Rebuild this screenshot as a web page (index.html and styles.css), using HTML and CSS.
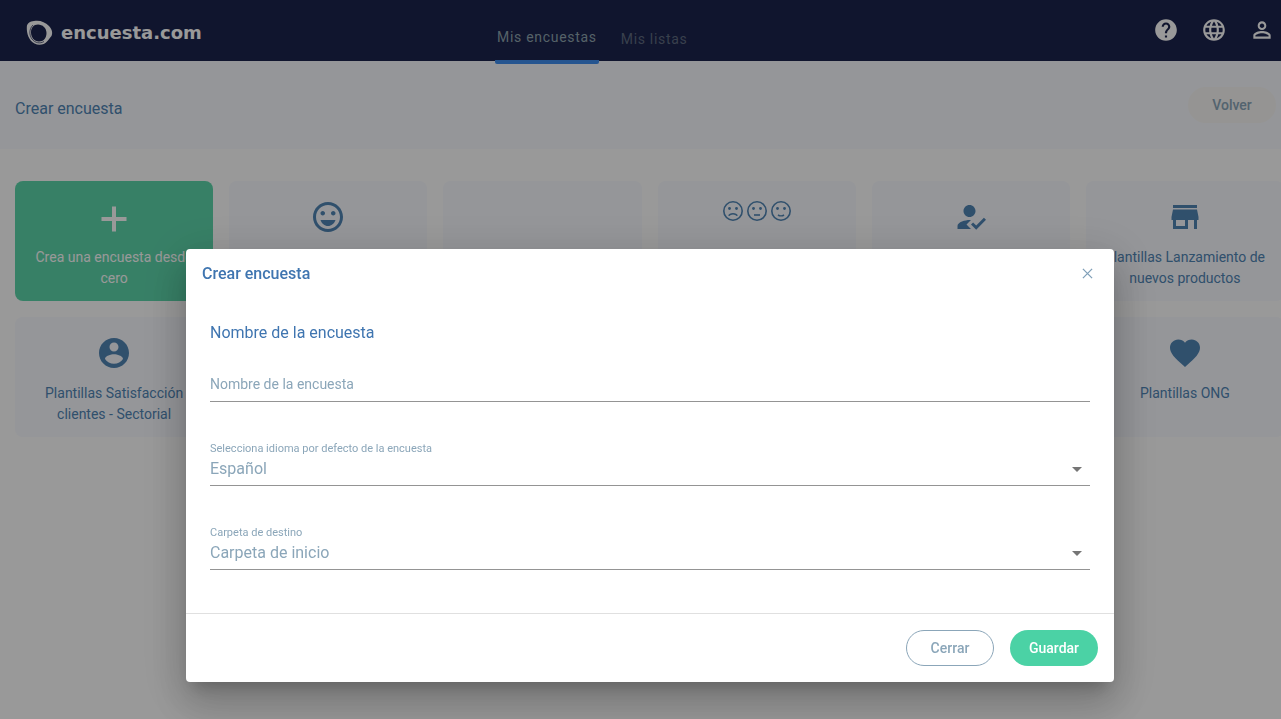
FILE: index.html
```html
<!DOCTYPE html>
<html lang="es">
<head>
<meta charset="utf-8">
<title>encuesta.com</title>
<link rel="stylesheet" href="styles.css">
</head>
<body>
<header class="topbar">
  <div class="brand">
    <svg class="brand-mark" viewBox="0 0 27 26" aria-hidden="true">
      <path fill="#fff" fill-rule="evenodd" d="M8 1C14 0 19 2 23 6C26 9 27 13 25.500 16C24 18 23 19 21.500 21C18 25 13 26 8.500 23.500C3 20.500 .5 14 .8 7C1 3 4 1.400 8 1ZM12 4.500C7.500 4.500 5 8 5 12.500C5 17.500 8.500 21.500 13 21.500C17.500 21.500 20.500 18 20.500 13C20.500 8 16.500 4.500 12 4.500Z"/>
      <path fill="none" stroke="#1b234d" stroke-width=".7" d="M7 5C3 9 3 15 6 19C9 23 14 24 18 21.500"/>
    </svg>
    <span class="brand-name">encuesta.com</span>
  </div>
  <nav class="tabs">
    <a class="tab tab-active" href="#">Mis encuestas</a>
    <a class="tab" href="#">Mis listas</a>
  </nav>
  <div class="tools">
    <button class="tool" aria-label="Ayuda"><svg viewBox="0 0 24 24"><path d="M12 2C6.480 2 2 6.480 2 12s4.480 10 10 10 10-4.480 10-10S17.520 2 12 2zm1 17h-2v-2h2v2zm2.070-7.750l-.9.920C13.450 12.900 13 13.500 13 15h-2v-.5c0-1.100.45-2.100 1.170-2.830l1.240-1.260c.37-.36.59-.86.59-1.410 0-1.100-.9-2-2-2s-2 .9-2 2H8c0-2.210 1.790-4 4-4s4 1.790 4 4c0 .88-.36 1.680-.93 2.250z"/></svg></button>
    <button class="tool" aria-label="Idioma"><svg viewBox="0 0 24 24"><path d="M11.990 2C6.470 2 2 6.480 2 12s4.470 10 9.990 10C17.520 22 22 17.520 22 12S17.520 2 11.990 2zm6.930 6h-2.950c-.32-1.250-.78-2.450-1.380-3.560 1.840.63 3.370 1.910 4.330 3.560zM12 4.040c.83 1.200 1.480 2.530 1.910 3.960h-3.820c.43-1.430 1.080-2.760 1.910-3.960zM4.260 14C4.100 13.360 4 12.690 4 12s.1-1.360.26-2h3.380c-.08.66-.14 1.320-.14 2 0 .68.06 1.340.14 2H4.260zm.82 2h2.950c.32 1.250.78 2.450 1.380 3.560-1.840-.63-3.370-1.900-4.330-3.560zm2.950-8H5.080c.96-1.660 2.490-2.930 4.330-3.560C8.810 5.550 8.350 6.750 8.030 8zM12 19.960c-.83-1.200-1.480-2.530-1.910-3.960h3.820c-.43 1.430-1.080 2.760-1.910 3.960zM14.340 14H9.660c-.09-.66-.16-1.320-.16-2 0-.68.07-1.350.16-2h4.680c.09.65.16 1.320.16 2 0 .68-.07 1.340-.16 2zm.25 5.560c.6-1.110 1.060-2.310 1.380-3.560h2.950c-.96 1.650-2.490 2.930-4.330 3.560zM16.360 14c.08-.66.14-1.320.14-2 0-.68-.06-1.340-.14-2h3.380c.16.640.26 1.310.26 2s-.1 1.360-.26 2h-3.380z"/></svg></button>
    <button class="tool" aria-label="Perfil"><svg viewBox="0 0 24 24"><path d="M12 5.900c1.160 0 2.100.94 2.100 2.100s-.94 2.100-2.100 2.100S9.900 9.160 9.900 8s.94-2.100 2.100-2.100m0 9c2.970 0 6.100 1.460 6.100 2.100v1.100H5.900V17c0-.64 3.130-2.100 6.100-2.100M12 4C9.790 4 8 5.790 8 8s1.790 4 4 4 4-1.790 4-4-1.790-4-4-4zm0 9c-2.670 0-8 1.340-8 4v3h16v-3c0-2.660-5.330-4-8-4z"/></svg></button>
  </div>
</header>

<section class="subbar">
  <h1 class="subbar-title">Crear encuesta</h1>
  <button class="btn btn-back">Volver</button>
</section>

<main class="cards">
  <button class="card card-primary">
    <svg class="card-icon" viewBox="0 0 36 36"><path d="M18 7.500V32.500M5.500 20H30.500" stroke="currentColor" stroke-width="4"/></svg>
    <span>Crea una encuesta desde cero</span>
  </button>
  <button class="card" aria-label="Satisfacción">
    <svg class="card-icon" viewBox="0 0 24 24"><path d="M11.990 2C6.470 2 2 6.470 2 12s4.470 10 9.990 10S22 17.530 22 12 17.520 2 11.990 2zM12 20c-4.420 0-8-3.580-8-8s3.580-8 8-8 8 3.580 8 8-3.580 8-8 8zm3.500-9c.83 0 1.500-.67 1.500-1.500S16.330 8 15.500 8 14 8.670 14 9.500s.67 1.500 1.500 1.500zm-7 0c.83 0 1.500-.67 1.500-1.500S9.330 8 8.500 8 7 8.670 7 9.500 7.670 11 8.500 11zM7 14c.8 2.300 2.700 4 5 4s4.200-1.700 5-4H7z"/></svg>
  </button>
  <button class="card" aria-label="Plantilla"></button>
  <button class="card" aria-label="Caritas">
    <span class="faces">
      <svg class="face" viewBox="0 0 24 24"><circle class="line" cx="12" cy="12" r="9.200"/><circle cx="8.500" cy="9.500" r="1.400"/><circle cx="15.500" cy="9.500" r="1.400"/><path class="line" d="M7.800 16.800C9 14 15 14 16.200 16.800"/></svg>
      <svg class="face" viewBox="0 0 24 24"><circle class="line" cx="12" cy="12" r="9.200"/><circle cx="8.500" cy="9.500" r="1.400"/><circle cx="15.500" cy="9.500" r="1.400"/><path class="line" d="M9 16H15"/></svg>
      <svg class="face" viewBox="0 0 24 24"><circle class="line" cx="12" cy="12" r="9.200"/><circle cx="8.500" cy="9.500" r="1.400"/><circle cx="15.500" cy="9.500" r="1.400"/><path class="line" d="M9 16C10.500 17 13.500 17 15 16"/></svg>
    </span>
  </button>
  <button class="card" aria-label="Registro">
    <svg class="card-icon" viewBox="0 0 24 24"><path d="M9 17l3-2.940c-.39-.04-.68-.06-1-.06-2.670 0-8 1.340-8 4v2h9l-3-3zm2-5c2.210 0 4-1.790 4-4s-1.790-4-4-4-4 1.790-4 4 1.790 4 4 4m4.470 8.500L12 17l1.400-1.410 2.070 2.080 5.130-5.170 1.400 1.410z"/></svg>
  </button>
  <button class="card">
    <svg class="card-icon" viewBox="0 0 24 24"><path d="M20 4H4v2h16V4zm1 10v-2l-1-5H4l-1 5v2h1v6h10v-6h4v6h2v-6h1zm-9 4H6v-4h6v4z"/></svg>
    <span>Plantillas Lanzamiento de nuevos productos</span>
  </button>
  <button class="card">
    <svg class="card-icon" viewBox="0 0 24 24"><path d="M12 2C6.480 2 2 6.480 2 12s4.480 10 10 10 10-4.480 10-10S17.520 2 12 2zm0 3c1.660 0 3 1.340 3 3s-1.340 3-3 3-3-1.340-3-3 1.340-3 3-3zm0 14.200c-2.500 0-4.710-1.280-6-3.220.03-1.990 4-3.080 6-3.080 1.990 0 5.970 1.090 6 3.080-1.290 1.940-3.500 3.220-6 3.220z"/></svg>
    <span>Plantillas Satisfacción clientes - Sectorial</span>
  </button>
  <button class="card card-last">
    <svg class="card-icon" viewBox="0 0 24 24"><path d="M12 21.350l-1.450-1.320C5.400 15.360 2 12.280 2 8.500 2 5.420 4.420 3 7.500 3c1.740 0 3.410.81 4.500 2.090C13.090 3.810 14.760 3 16.500 3 19.580 3 22 5.420 22 8.500c0 3.780-3.400 6.860-8.550 11.540L12 21.350z"/></svg>
    <span>Plantillas ONG</span>
  </button>
</main>

<div class="overlay">
  <form class="dialog" role="dialog" aria-labelledby="dialog-title">
    <div class="dialog-head">
      <h2 class="dialog-title" id="dialog-title">Crear encuesta</h2>
      <button class="close" type="button" aria-label="Cerrar ventana"><svg viewBox="0 0 12 12"><path d="M1 1L11 11M11 1L1 11"/></svg></button>
    </div>
    <div class="dialog-body">
      <label class="name-label" for="name">Nombre de la encuesta</label>
      <input class="name-input" id="name" type="text" placeholder="Nombre de la encuesta">
      <div class="field">
        <label class="field-label" for="language">Selecciona idioma por defecto de la encuesta</label>
        <select class="field-select" id="language"><option>Español</option></select>
        <svg class="arrow" viewBox="0 0 10 5"><path d="M0 0H10L5 5Z"/></svg>
      </div>
      <div class="field">
        <label class="field-label" for="folder">Carpeta de destino</label>
        <select class="field-select" id="folder"><option>Carpeta de inicio</option></select>
        <svg class="arrow" viewBox="0 0 10 5"><path d="M0 0H10L5 5Z"/></svg>
      </div>
    </div>
    <div class="dialog-foot">
      <button class="btn btn-outline" type="button">Cerrar</button>
      <button class="btn btn-save" type="button">Guardar</button>
    </div>
  </form>
</div>
</body>
</html>
```
FILE: styles.css
```css
* { box-sizing: border-box; }

html, body { height: 100%; }

body {
  margin: 0;
  overflow: hidden;
  background: #fff;
  color: #5085b5;
  font-family: Roboto, "Liberation Sans", sans-serif;
  font-size: 16px;
}

button, input, select { font: inherit; color: inherit; }
button { padding: 0; border: 0; background: none; cursor: pointer; }
svg { display: block; fill: currentColor; }

.topbar {
  display: flex;
  align-items: flex-start;
  height: 61px;
  padding: 0 6px 0 26px;
  background: #1b234d;
}

.brand {
  display: flex;
  align-items: center;
  gap: 8px;
  width: 469px;
  height: 66px;
  color: #fff;
}

.brand-mark { width: 27px; height: 26px; }

.brand-name {
  font: bold 18px/24px "DejaVu Sans", sans-serif;
}

.tabs {
  display: flex;
  align-items: flex-start;
  gap: 20px;
}

.tab {
  padding: 29px 2px 0;
  color: #5f6b80;
  font-size: 14px;
  line-height: 20px;
  letter-spacing: 0.05em;
  text-decoration: none;
}

.tab-active {
  padding: 27px 2px 13px;
  border-bottom: 4px solid #3e8ef0;
  border-radius: 0 0 2px 2px;
  color: #8fa3ad;
}

.tools {
  display: flex;
  gap: 22px;
  margin-left: auto;
  padding-top: 17px;
  color: #fff;
}

.tool svg { width: 26px; height: 26px; }

.subbar {
  display: flex;
  align-items: flex-start;
  justify-content: space-between;
  padding: 26px 5px 26px 15px;
  background: #f8faff;
}

.subbar-title {
  margin: 0;
  padding-top: 10px;
  font-size: 16px;
  font-weight: 400;
  line-height: 24px;
}

.btn {
  width: 88px;
  height: 36px;
  border-radius: 18px;
  font-size: 14px;
  font-weight: 500;
}

.btn-back { background: #f8f7f5; color: #8ba6b9; }

.cards {
  display: grid;
  grid-template-columns: repeat(6, 1fr);
  gap: 16px;
  margin-right: -3px;
  padding: 32px 0 0 15px;
}

.card {
  display: flex;
  flex-direction: column;
  align-items: center;
  gap: 12px;
  height: 120px;
  padding: 18px 16px 0;
  border-radius: 8px;
  background: #f8faff;
  font-size: 14px;
  line-height: 21px;
}

.card-primary { background: #5dd6ab; color: #fff; }
.card-last { grid-column: 6; }
.card-icon { width: 36px; height: 36px; }
.faces { display: flex; }
.face { width: 24px; height: 24px; }
.line { fill: none; stroke: currentColor; stroke-width: 1.6; }

.overlay {
  position: fixed;
  inset: 0;
  display: flex;
  align-items: flex-start;
  padding: 249px 167px 0 186px;
  background: rgba(0, 0, 0, 0.4);
}

.dialog {
  flex: 1;
  border-radius: 4px;
  background: #fff;
  color: #3f75b0;
  box-shadow: 0 11px 15px -7px rgba(0, 0, 0, 0.2), 0 24px 38px 3px rgba(0, 0, 0, 0.14), 0 9px 46px 8px rgba(0, 0, 0, 0.12);
}

.dialog-head {
  display: flex;
  align-items: center;
  justify-content: space-between;
  height: 48px;
  padding: 0 21px 0 16px;
}

.dialog-title { margin: 0; font-size: 16px; font-weight: 500; }

.close svg {
  width: 11px;
  height: 11px;
  fill: none;
  stroke: #7f9fb8;
  stroke-width: 1.4;
}

.dialog-body {
  display: flex;
  flex-direction: column;
  padding: 24px 24px 43px;
}

.name-label { line-height: 24px; }

.name-input {
  height: 35px;
  margin-top: 22px;
  padding: 0;
  border: 0;
  border-bottom: 1px solid #949494;
  outline: 0;
  font-size: 14px;
}

.name-input::placeholder { color: #8ba6b9; opacity: 1; }

.field {
  position: relative;
  display: flex;
  flex-direction: column;
  margin-top: 38px;
  color: #8ba6b9;
}

.field-label { padding-top: 1px; font-size: 11px; line-height: 15px; }

.field-select {
  height: 30px;
  padding: 0 0 5px;
  border: 0;
  border-bottom: 1px solid #949494;
  border-radius: 0;
  outline: 0;
  appearance: none;
  background: none;
}

.arrow {
  position: absolute;
  right: 8px;
  bottom: 14px;
  width: 10px;
  height: 5px;
  color: #757575;
  pointer-events: none;
}

.dialog-foot {
  display: flex;
  justify-content: flex-end;
  gap: 16px;
  padding: 16px;
  border-top: 1px solid #e0e0e0;
}

.btn-outline { border: 1px solid #8ba6b9; color: #8ba6b9; }
.btn-save { background: #4bd2a5; color: #fff; }
```
